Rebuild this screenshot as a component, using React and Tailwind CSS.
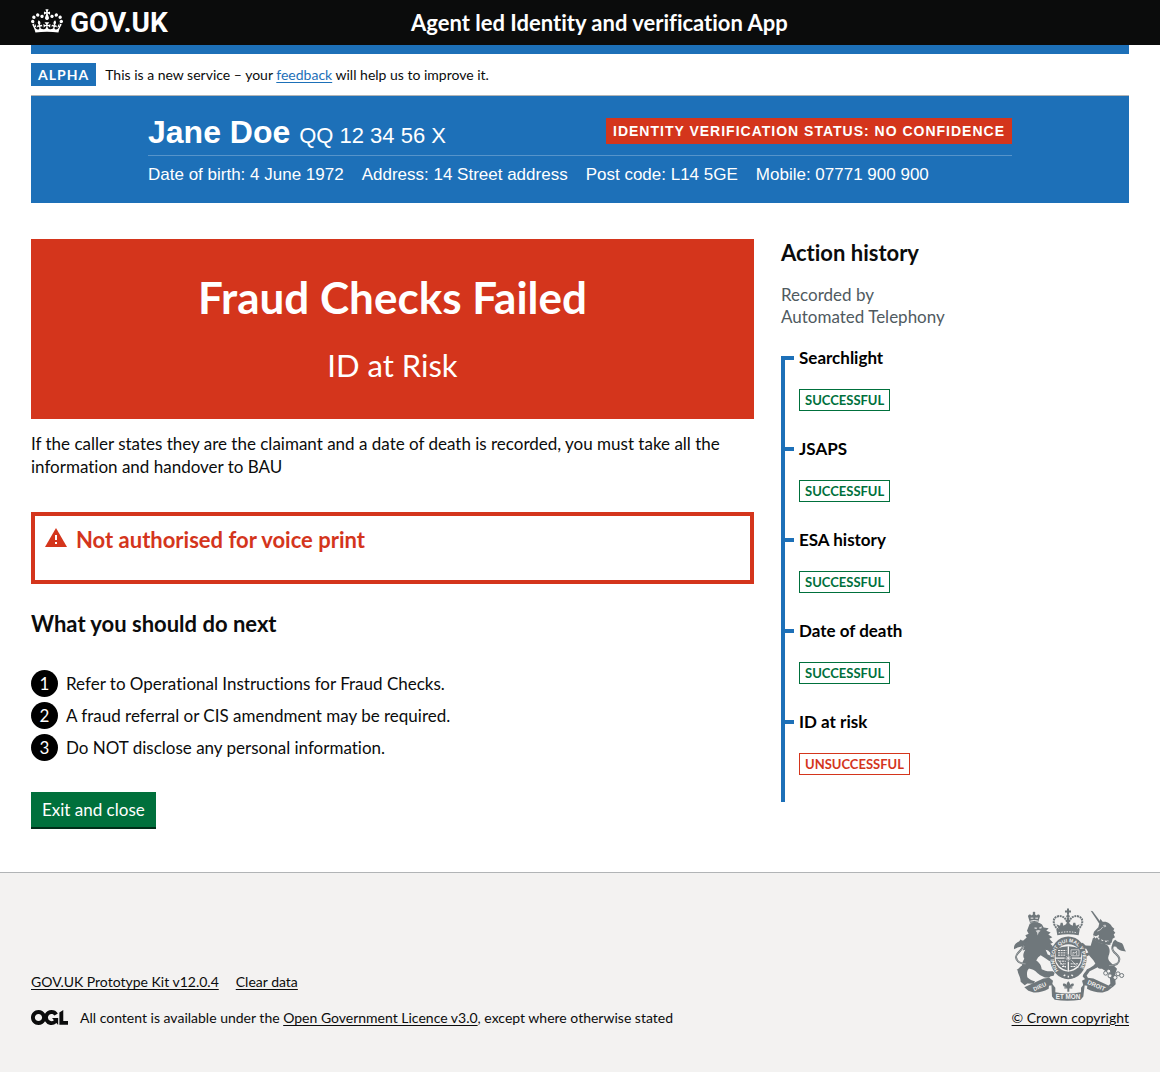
import React from "react";

const steps = [
  "Refer to Operational Instructions for Fraud Checks.",
  "A fraud referral or CIS amendment may be required.",
  "Do NOT disclose any personal information.",
];

const history = [
  { name: "Searchlight", ok: true },
  { name: "JSAPS", ok: true },
  { name: "ESA history", ok: true },
  { name: "Date of death", ok: true },
  { name: "ID at risk", ok: false },
];

const details = [
  "Date of birth: 4 June 1972",
  "Address: 14 Street address",
  "Post code: L14 5GE",
  "Mobile: 07771 900 900",
];

function Crown() {
  return (
    <svg aria-hidden="true" viewBox="0 0 132 97" className="mb-1 h-6 w-8 shrink-0" fill="currentColor">
      <path
        fillRule="evenodd"
        d="M25 30.2c3.5 1.5 7.7-.2 9.1-3.7 1.5-3.6-.2-7.8-3.9-9.2-3.6-1.4-7.6.3-9.1 3.9-1.4 3.5.3 7.5 3.9 9zM9 39.5c3.6 1.5 7.8-.2 9.2-3.7 1.5-3.6-.2-7.8-3.9-9.1-3.6-1.5-7.6.2-9.1 3.8-1.4 3.5.3 7.5 3.8 9zM4.4 57.2c3.5 1.5 7.7-.2 9.1-3.8 1.5-3.6-.2-7.7-3.9-9.1-3.5-1.5-7.6.3-9.1 3.8-1.4 3.5.3 7.6 3.9 9.1zm38.3-21.4c3.5 1.5 7.7-.2 9.1-3.8 1.5-3.6-.2-7.7-3.9-9.1-3.6-1.5-7.6.3-9.1 3.8-1.3 3.6.4 7.7 3.9 9.1zm64.4-5.6c-3.6 1.5-7.8-.2-9.1-3.7-1.5-3.6.2-7.8 3.8-9.2 3.6-1.4 7.7.3 9.2 3.9 1.3 3.5-.4 7.5-3.9 9zm15.9 9.3c-3.6 1.5-7.7-.2-9.1-3.7-1.5-3.6.2-7.8 3.7-9.1 3.6-1.5 7.7.2 9.2 3.8 1.5 3.5-.3 7.5-3.8 9zm4.7 17.7c-3.6 1.5-7.8-.2-9.2-3.8-1.5-3.6.2-7.7 3.9-9.1 3.6-1.5 7.7.3 9.2 3.8 1.3 3.5-.4 7.6-3.9 9.1zM89.3 35.8c-3.6 1.5-7.8-.2-9.2-3.8-1.4-3.6.2-7.7 3.9-9.1 3.6-1.5 7.7.3 9.2 3.8 1.4 3.6-.3 7.7-3.9 9.1zM69.7 17.7l8.9 4.7V9.3l-8.9 2.8c-.2-.3-.5-.6-.9-.9L72.4 0H59.6l3.5 11.2c-.3.3-.6.5-.9.9l-8.8-2.8v13.1l8.8-4.7c.3.3.6.7.9.9l-5 15.4v.1c-.2.8-.4 1.6-.4 2.4 0 4.1 3.1 7.5 7 8.1h.2c.3 0 .7.1 1 .1.4 0 .7 0 1-.1h.2c4-.6 7.1-4.1 7.1-8.1 0-.8-.1-1.7-.4-2.4V34l-5.1-15.4c.4-.2.7-.6 1-.9zM66 92.8c16.9 0 32.8 1.1 47.1 3.2 4-16.9 8.9-26.7 14-33.5l-9.6-3.4c1 4.9 1.1 7.2 0 10.2-1.5-1.4-3-4.3-4.2-8.7L108.6 76c2.8-2 5-3.2 7.5-3.3-4.4 9.4-10 11.9-13.6 11.2-4.3-.8-6.3-4.6-5.6-7.9 1-4.7 5.7-5.9 8-.5 4.3-8.7-3-11.4-7.6-8.8 7.1-7.2 7.9-13.5 2.1-21.1-8 6.1-8.1 12.3-4.5 20.8-4.7-5.4-12.1-2.5-9.5 6.2 3.4-5.2 7.9-2 7.2 3.1-.6 4.3-6.4 7.8-13.5 7.2-10.3-.9-10.9-8-11.2-13.8 2.5-.5 7.1 1.8 11 7.3L80.2 60c-4.1 4.4-8 5.3-12.3 5.4 1.4-4.4 8-11.6 8-11.6H55.5s6.4 7.2 7.9 11.6c-4.2-.1-8-1-12.3-5.4l1.4 16.4c3.9-5.5 8.5-7.7 10.9-7.3-.3 5.8-.9 12.8-11.1 13.8-7.2.6-12.9-2.9-13.5-7.2-.7-5 3.8-8.3 7.1-3.1 2.7-8.7-4.6-11.6-9.4-6.2 3.7-8.5 3.6-14.7-4.6-20.8-5.8 7.6-5 13.9 2.2 21.1-4.7-2.6-11.9.1-7.7 8.8 2.3-5.5 7.1-4.2 8.1.5.7 3.3-1.3 7.1-5.7 7.9-3.5.7-9-1.8-13.5-11.2 2.5.1 4.7 1.3 7.5 3.3l-4.7-15.4c-1.2 4.4-2.7 7.2-4.3 8.7-1.1-3-.9-5.3 0-10.2l-9.5 3.4c5 6.9 9.9 16.7 14 33.5 14.8-2.1 30.8-3.2 47.7-3.2z"
      />
    </svg>
  );
}

function OglLogo() {
  return (
    <svg aria-hidden="true" viewBox="0 0 483.2 195.7" className="mb-0.5 h-[15px] w-[37px] shrink-0" fill="currentColor">
      <path d="M421.5 142.8V.1l-50.7 32.3v161.1h112.4v-50.7zm-122.3-9.6A47.12 47.12 0 0 1 221 97.8c0-26 21.1-47.1 47.1-47.1 16.7 0 31.4 8.7 39.7 21.8l42.7-27.2A97.63 97.63 0 0 0 268.1 0c-36.5 0-68.3 20.1-85.1 49.7A98 98 0 0 0 97.8 0C43.9 0 0 43.9 0 97.8s43.9 97.8 97.8 97.8c36.5 0 68.3-20.1 85.1-49.7a97.76 97.76 0 0 0 149.6 25.4l19.4 22.2h3v-87.8h-80l24.3 27.5zM97.8 145c-26 0-47.1-21.1-47.1-47.1s21.1-47.1 47.1-47.1 47.1 21.1 47.1 47.1S123.8 145 97.8 145" />
    </svg>
  );
}

function RoyalArms() {
  const ink = "#6f777b";
  const paper = "#f3f2f1";
  return (
    <svg aria-hidden="true" viewBox="42 56 342 278" className="h-[93px] w-[114px]" fill={ink}>
      {/* imperial crown */}
      <path d="M204 57h6v6h6v6h-6v7h-6v-7h-6v-6h6z" />
      <circle cx="207" cy="80" r="5" />
      <path d="M207 84v35" fill="none" stroke={ink} strokeWidth="7" />
      <path d="M178 121c-19-16-18-38 0-41 15-2 23 8 27 20M236 121c19-16 18-38 0-41-15-2-23 8-27 20" fill="none" stroke={ink} strokeWidth="6" strokeDasharray="6 2" />
      <path d="M180 121l-8-17 11 5 2-9 6 0 2 9 8-5 6-8 6 8 8 5 2-9h6l2 9 11-5-8 17z" />
      <path d="M172 120q35-8 70 0l-3 17q-32-6-64 0z" />
      <path d="M179 130q28-6 56 0" fill="none" stroke={paper} strokeWidth="3" strokeDasharray="4 4" />

      {/* lion */}
      <path d="M93 100l-6-20c1-6 8-7 11-2l4-4-1-5 4-3 4 3-1 5 4 4c4-5 11-4 11 2l-6 20z" />
      <path d="M94 95q12-4 23 0M95 86h8M109 86h8" fill="none" stroke={paper} strokeWidth="3" />
      <path d="M92 103c10-7 26-7 37 2l5 9 15 2-7 8 13 5-7 6 12 8-9 5 11 12-8 3c9 6 11 15 13 24l-8-1-3 6-9-9-7-2 6 14c9 2 14 8 15 16l-7-1-2 5-13-9-14-9-8 7c-6 13-14 18-20 26l-8 8c-7 8-5 17-4 25 7 7 15 10 23 12l-4 8-19-1-8 5-12-10c0-15-8-22-9-34l-3-2c6-2 10-10 16-13 1-10 4-16 7-20-6-8-2-20 3-27l-8 2 5-12-7-1 9-12-5-5 10-9-4-7 10-4-5-9z" />
      <path d="M98 205c20 10 29 20 30 34 9 4 15 7 33 6l6 5-3 9-9 1-5 5-12-1-11-5c-12-7-16-16-29-20l-22-6z" />
      <path d="M80 223c-15 0-27-7-29-19-3-14 25-23 22-40" fill="none" stroke={ink} strokeWidth="6" />
      <path d="M80 223c-15 0-27-7-29-19-3-14 25-23 22-40" fill="none" stroke={paper} strokeWidth="1" />
      <path d="M45 179c-1-15 8-20 15-23l5-6 4 3 13 0-7 14c-6 7-16 3-30 12z" />
      <path d="M107 113l8 2-3 4-6-2zM121 113l8-2-2 6-6 1zM110 124q9-5 15 0l-6 5-3 9-2-9z" fill={paper} opacity=".75" />

      {/* unicorn */}
      <path d="M275 64l6 1 25 34-5 4z" />
      <path d="M301 101l3-13 7 9c15-2 25 7 28 15l7 6-3 5 6 7-5 5 4 8-7 5-3 11-8 7-34-12 4-18-9 4-9-3 3-10 13-14z" />
      <path d="M282 145l43 22c8 8 9 20 4 31-3 8-2 14 6 21l19 19-7 21 2 10 1 15-9 9-13-4 6-6c0-14-3-19 0-28l-25-17c-9 0-11-1-13-5l-24 12-9 13 5 10-8 3-9-10c0-7 9-14 13-22 15-6 20-11 25-17l-6-10-13-15-14 7-4 10-9-6c0-5 2-9 7-13l18-6-6-11-15-1-5-12 9-5 9 8 15 1z" />
      <path d="M288 145q21 16 41 13" fill="none" stroke={paper} strokeWidth="10" />
      <path d="M284 139l5 8 5-4 5 8 6-5 4 9 7-4 4 7 7-4 5 4 3 8q-31 1-50-15z" />
      <path d="M295 125l9-4 7-8M313 108l6-1 1 4-6 1" fill="none" stroke={paper} strokeWidth="2" />
      <path d="M330 228c20 0 31-7 31-19 0-13-21-19-21-32 0-6 4-13 10-15" fill="none" stroke={ink} strokeWidth="6" />
      <path d="M330 228c20 0 31-7 31-19 0-13-21-19-21-32" fill="none" stroke={paper} strokeWidth="1" />
      <path d="M340 170q-1-14 9-19l6 5 14 5c6 6 5 15 12 25-12-1-26-4-29-14z" />
      {[[320, 251], [333, 259], [348, 264], [357, 253], [368, 258], [329, 245]].map(([x, y]) => (
        <circle key={x} cx={x} cy={y} r="6" fill={paper} stroke={ink} strokeWidth="3" />
      ))}

      {/* garter and shield */}
      <ellipse cx="208" cy="205" rx="55" ry="64" />
      <circle cx="208" cy="205" r="41" fill={paper} />
      <path d="M170 179q38-18 76 0v27q0 26-38 38-38-12-38-38z" />
      <path d="M208 170v76M168 206h80" stroke={paper} strokeWidth="4" />
      <path d="M177 183h25M177 190h25M177 197h25M215 223h22M215 231h15M181 215h20M183 223h18M189 231h12" stroke={paper} strokeWidth="3" strokeDasharray="6 2" />
      <path d="M216 181h24v18h-24zM222 198v-10l6 3 5-6v12M176 211l24 24M216 211l22 24" fill="none" stroke={paper} strokeWidth="2" />
      <circle cx="208" cy="206" r="11" />
      <path d="M208 197v18M199 206h18M202 200l12 12M214 200l-12 12" stroke={paper} strokeWidth="2" />
      <path id="garter-band" d="M179 243A43 49 0 1 1 238 243" fill="none" />
      <text fill={paper} fontSize="15" fontWeight="700" fontFamily="Liberation Sans, sans-serif">
        <textPath href="#garter-band">HONI SOIT QUI MAL Y PENSE</textPath>
      </text>
      <path d="M194 259l5-3M208 264v-5M222 259l-5-3" stroke={paper} strokeWidth="4" />

      {/* motto scroll */}
      <path d="M76 293l57-26 18-2 11 9-3 13-9 2-1 9c-16 9-30 12-45 11l-16-5z" />
      <path d="M340 293l-57-26-18-2-16 9 4 13 12 2-1 9c16 9 32 12 47 11l16-5z" />
      <path d="M157 280l12 15v13q38 8 77 0v-13l12-15-5 41-8 10q-40 6-78 0l-8-10z" />
      <path d="M205 307v-10h-9v-4h8c-10 0-14-4-12-10 7-3 10 1 12 7-3-7 0-11 4-15 4 4 7 8 4 15 2-6 6-10 12-7 2 6-3 10-12 10h8v4h-9v10z" />
      <g fill={paper} fontWeight="700" fontFamily="Liberation Sans, sans-serif">
        <text x="207" y="328" textAnchor="middle" fontSize="19">ET MON</text>
        <text x="106" y="305" fontSize="17" transform="rotate(-24 106 305)">DIEU</text>
        <text x="264" y="283" fontSize="18" transform="rotate(23 264 283)">DROIT</text>
      </g>
    </svg>
  );
}

function WarningIcon() {
  return (
    <svg aria-hidden="true" viewBox="0 0 22 19" className="mt-0.5 h-[19px] w-[22px] shrink-0">
      <path d="M11 0l11 19H0z" fill="#d4351c" />
      <path d="M10 7h2v5h-2zM10 14h2v2h-2z" fill="#fff" />
    </svg>
  );
}

export default function App() {
  return (
    <div className="flex min-h-screen flex-col bg-white font-[Lato,sans-serif] text-[17px] leading-[23px] text-[#0b0c0c] [font-variant-ligatures:none]">
      <header className="bg-[#0b0c0c] px-[31px] text-white">
        <div className="flex h-[45px] items-center">
          <div className="w-1/3">
            <a href="#" className="flex w-fit items-center gap-[7px]">
              <Crown />
              <span className="font-[Roboto,sans-serif] text-[28px] leading-8 font-bold">GOV.UK</span>
            </a>
          </div>
          <a href="#" className="ml-3.5 text-[22px] leading-7 font-bold">
            Agent led Identity and verification App
          </a>
        </div>
      </header>

      <div className="px-[31px]">
        <div className="h-[9px] bg-[#1d70b8]" />
        <div className="flex items-center gap-[9px] border-b border-[#b1b4b6] py-[9px]">
          <strong className="bg-[#1d70b8] px-[7px] text-sm leading-[23px] font-bold tracking-[1px] text-white">
            ALPHA
          </strong>
          <span className="text-sm leading-[18px]">
            This is a new service – your{" "}
            <a href="#" className="text-[#1d70b8] underline underline-offset-2">feedback</a>{" "}
            will help us to improve it.
          </span>
        </div>

        <section className="bg-[#1d70b8] pt-[18px] pb-[19px] font-['Liberation_Sans',sans-serif] text-white">
          <div className="mx-auto max-w-[864px]">
            <div className="flex items-start justify-between border-b border-[#5694ca] pb-[5px]">
              <p className="text-[32px] leading-9 font-bold">
                Jane Doe <span className="text-[22px] leading-none font-normal">QQ 12 34 56 X</span>
              </p>
              <strong className="mt-1 bg-[#d4351c] px-[7px] text-sm leading-[26px] font-bold tracking-[1px]">
                IDENTITY VERIFICATION STATUS: NO CONFIDENCE
              </strong>
            </div>
            <ul className="flex flex-wrap gap-x-[18px] pt-[9px] text-[17px] leading-[19px]">
              {details.map((d) => (
                <li key={d}>{d}</li>
              ))}
            </ul>
          </div>
        </section>

        <main className="grid grid-cols-[723fr_348fr] items-start gap-[27px] pt-9 pb-[45px]">
          <div>
            <div className="bg-[#d4351c] px-8 pt-8 pb-9 text-center text-white">
              <h1 className="text-[44px] leading-[52px] font-bold">Fraud Checks Failed</h1>
              <p className="mt-6 text-[31px] leading-9">ID at Risk</p>
            </div>
            <p className="mt-[13px]">
              If the caller states they are the claimant and a date of death is recorded, you must take all the
              information and handover to BAU
            </p>

            <div className="mt-[34px] flex gap-[9px] border-4 border-[#d4351c] px-2.5 pt-2.5 pb-[27px]">
              <WarningIcon />
              <h2 className="text-[22px] leading-[27px] font-bold text-[#d4351c]">
                Not authorised for voice print
              </h2>
            </div>

            <h2 className="mt-[26px] text-[22px] leading-7 font-bold">What you should do next</h2>
            <ol className="mt-8 flex flex-col gap-[5px]">
              {steps.map((s, i) => (
                <li key={s} className="flex items-center gap-2">
                  <span className="size-[27px] shrink-0 rounded-full bg-black text-center leading-[27px] text-white">
                    {i + 1}
                  </span>
                  {s}
                </li>
              ))}
            </ol>
            <button
              type="button"
              className="mt-[31px] block bg-[#00703c] px-[11px] py-1.5 text-white shadow-[0_2px_0_#002d18]"
            >
              Exit and close
            </button>
          </div>

          <aside>
            <h2 className="text-[22px] leading-7 font-bold">Action history</h2>
            <p className="mt-[17px] leading-[22px] text-[#505a5f]">
              Recorded by
              <br />
              Automated Telephony
            </p>
            <ol className="mt-7 border-l-4 border-[#1d70b8]">
              {history.map((h) => (
                <li key={h.name} className="group flex gap-[5px]">
                  <span className="h-1 w-[9px] bg-[#1d70b8]" />
                  <div className="-mt-[9px] pb-9 group-last:pb-[27px]">
                    <h3 className="leading-[22px] font-bold text-black">{h.name}</h3>
                    <strong
                      className={
                        h.ok
                          ? "mt-5 block w-fit border border-[#00703c] px-[5px] text-[13px] leading-5 font-bold text-[#00703c]"
                          : "mt-5 block w-fit border border-[#d4351c] px-[5px] text-[13px] leading-5 font-bold text-[#d4351c]"
                      }
                    >
                      {h.ok ? "SUCCESSFUL" : "UNSUCCESSFUL"}
                    </strong>
                  </div>
                </li>
              ))}
            </ol>
          </aside>
        </main>
      </div>

      <footer className="grow border-t border-[#b1b4b6] bg-[#f3f2f1] px-[31px] pt-[35px] pb-[45px] text-sm leading-[18px]">
        <div className="flex items-end justify-between">
          <div>
            <ul className="flex gap-[17px]">
              <li>
                <a href="#" className="underline underline-offset-2">GOV.UK Prototype Kit v12.0.4</a>
              </li>
              <li>
                <a href="#" className="underline underline-offset-2">Clear data</a>
              </li>
            </ul>
            <div className="mt-[18px] flex items-center gap-3">
              <OglLogo />
              <span>
                All content is available under the{" "}
                <a href="#" className="underline underline-offset-2">Open Government Licence v3.0</a>, except
                where otherwise stated
              </span>
            </div>
          </div>
          <a href="#" className="flex flex-col items-center gap-2 underline underline-offset-2">
            <RoyalArms />
            <span>© Crown copyright</span>
          </a>
        </div>
      </footer>
    </div>
  );
}
